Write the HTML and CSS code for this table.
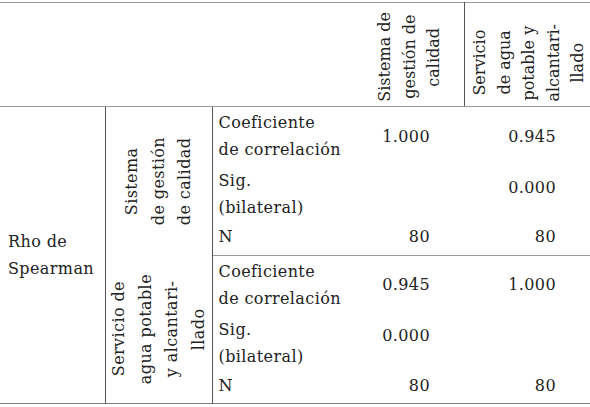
FILE: index.html
```html
<!DOCTYPE html>
<html lang="es">
  <head>
    <meta charset="UTF-8" />
    <meta name="viewport" content="width=device-width, initial-scale=1.0" />
    <title>Correlación Rho de Spearman</title>
    <link rel="stylesheet" href="styles.css">
  </head>
  <body>
    <table class="corr">
      <colgroup>
        <col class="c-test" />
        <col class="c-var" />
        <col class="c-stat" />
        <col class="c-val" />
        <col class="c-val2" />
      </colgroup>
      <thead>
        <tr class="head">
          <th colspan="3"></th>
          <th class="vhead first"><div class="vtext">Sistema de<br>gestión de<br>calidad</div></th>
          <th class="vhead sep"><div class="vtext">Servicio<br>de agua<br>potable y<br>alcantari-<br>llado</div></th>
        </tr>
      </thead>
      <tbody>
        <tr class="coef">
          <td class="test" rowspan="6">Rho de<br>Spearman</td>
          <td class="var" rowspan="3"><div class="vtext">Sistema<br>de gestión<br>de calidad</div></td>
          <td class="stat">Coeficiente<br>de correlación</td>
          <td class="num">1.000</td>
          <td class="num">0.945</td>
        </tr>
        <tr class="sig">
          <td class="stat">Sig.<br>(bilateral)</td>
          <td class="num"></td>
          <td class="num">0.000</td>
        </tr>
        <tr class="n end">
          <td class="stat">N</td>
          <td class="num">80</td>
          <td class="num">80</td>
        </tr>
        <tr class="coef">
          <td class="var" rowspan="3"><div class="vtext">Servicio de<br>agua potable<br>y alcantari-<br>llado</div></td>
          <td class="stat">Coeficiente<br>de correlación</td>
          <td class="num">0.945</td>
          <td class="num">1.000</td>
        </tr>
        <tr class="sig">
          <td class="stat">Sig.<br>(bilateral)</td>
          <td class="num">0.000</td>
          <td class="num"></td>
        </tr>
        <tr class="n">
          <td class="stat">N</td>
          <td class="num">80</td>
          <td class="num">80</td>
        </tr>
      </tbody>
    </table>
  </body>
</html>
```

FILE: styles.css
```css
body {
  margin: 0;
  padding: 0;
  background: white;
  font-family: "DejaVu Serif", serif;
  font-size: 16px;
  color: #222;
}
.corr {
  width: 590px;
  margin-top: 2px;
  border-collapse: collapse;
  table-layout: fixed;
  letter-spacing: 0.4px;
  border-top: 1.5px solid #9a9a9a;
  border-bottom: 1.5px solid #7a7a7a;
}
.c-test {
  width: 105px;
}
.c-var {
  width: 107px;
}
.c-stat {
  width: 136px;
}
.c-val {
  width: 116px;
}
.c-val2 {
  width: 126px;
}
th,
td {
  padding: 0;
  font-weight: normal;
}
.head {
  height: 104px;
}
.head th {
  border-bottom: 1.5px solid #9a9a9a;
}
.vhead {
  text-align: center;
  vertical-align: bottom;
  padding-bottom: 4px;
  line-height: 24.5px;
  letter-spacing: 0;
}
.vhead.first {
  padding-left: 8px;
}
.vhead.sep {
  border-left: 1px solid #555;
  padding-left: 3px;
}
.vtext {
  display: inline-block;
  vertical-align: top;
  writing-mode: vertical-rl;
  transform: rotate(180deg);
  text-align: center;
}
.test {
  border-right: 1px solid #555;
  vertical-align: middle;
  text-align: left;
  padding-left: 8px;
  line-height: 27px;
}
.var {
  border-right: 1px solid #555;
  text-align: center;
  vertical-align: middle;
  line-height: 26.5px;
}
.stat {
  padding: 2px 6px;
  line-height: 27px;
  vertical-align: top;
}
.num {
  text-align: right;
  padding-right: 34px;
  vertical-align: middle;
}
.coef {
  height: 58px;
}
.sig {
  height: 58px;
}
.sig .num {
  padding-bottom: 14px;
}
.n {
  height: 32px;
}
.n .stat {
  padding-top: 0;
}
.n .num {
  vertical-align: top;
  line-height: 27px;
}
.end td {
  border-bottom: 1.5px solid #9a9a9a;
}
```
